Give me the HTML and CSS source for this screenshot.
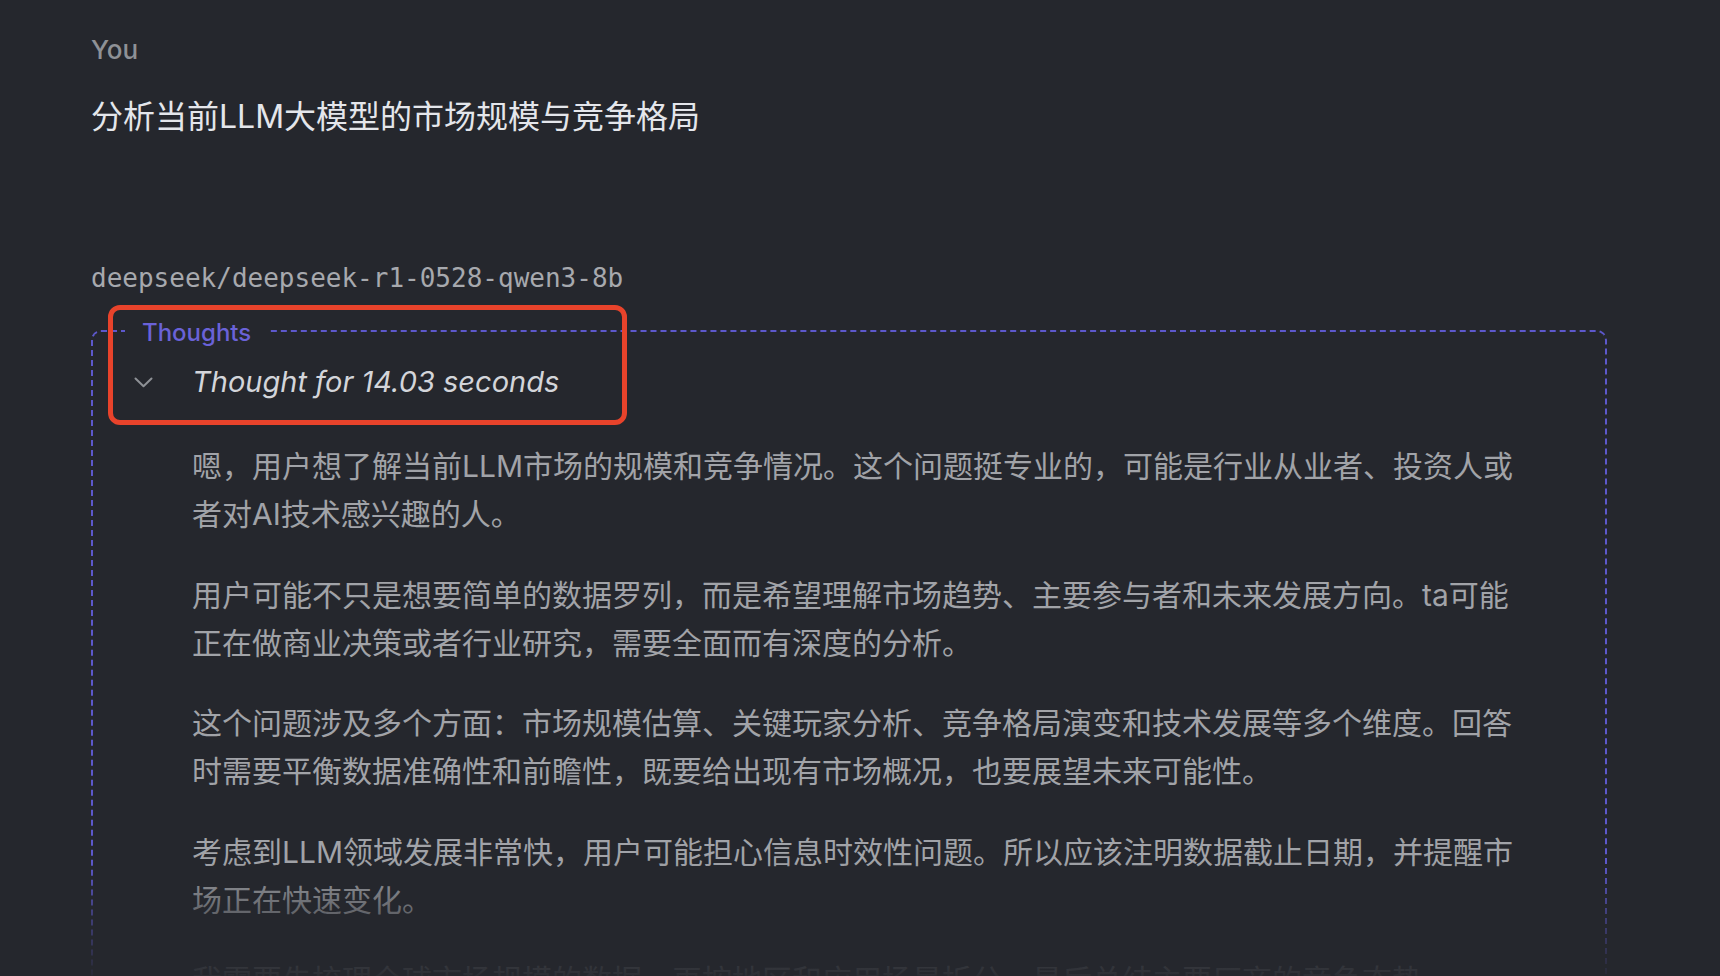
FILE: index.html
```html
<!DOCTYPE html>
<html lang="zh-CN">
<head>
<meta charset="utf-8">
<title>Chat</title>
<link rel="stylesheet" href="styles.css">
</head>
<body>
<main class="page">
  <section class="msg user">
    <div class="role">You</div>
    <div class="question">分析当前LLM大模型的市场规模与竞争格局</div>
  </section>
  <section class="msg assistant">
    <div class="model">deepseek/deepseek-r1-0528-qwen3-8b</div>
    <fieldset class="thoughts">
      <legend class="thoughts-label">Thoughts</legend>
      <div class="summary">
        <svg class="chevron" width="19" height="11" viewBox="0 0 19 11" aria-hidden="true"><path d="M1.5 1.5 L9.5 9.3 L17.5 1.5" fill="none" stroke="currentColor" stroke-width="2" stroke-linecap="round" stroke-linejoin="round"/></svg>
        <span class="summary-text">Thought for 14.03 seconds</span>
      </div>
      <div class="thought-body">
        <p>嗯，用户想了解当前LLM市场的规模和竞争情况。这个问题挺专业的，可能是行业从业者、投资人或者对AI技术感兴趣的人。</p>
        <p>用户可能不只是想要简单的数据罗列，而是希望理解市场趋势、主要参与者和未来发展方向。ta可能正在做商业决策或者行业研究，需要全面而有深度的分析。</p>
        <p>这个问题涉及多个方面：市场规模估算、关键玩家分析、竞争格局演变和技术发展等多个维度。回答时需要平衡数据准确性和前瞻性，既要给出现有市场概况，也要展望未来可能性。</p>
        <p>考虑到LLM领域发展非常快，用户可能担心信息时效性问题。所以应该注明数据截止日期，并提醒市场正在快速变化。</p>
        <p>我需要先梳理全球市场规模的数据，再按地区和应用场景拆分，最后总结主要厂商的竞争态势。</p>
      </div>
    </fieldset>
  </section>
  <div class="fade"></div>
  <div class="highlight"></div>
</main>
</body>
</html>
```
FILE: styles.css
```css
html, body {
  margin: 0;
  padding: 0;
  background: #25272d;
  height: 100%;
  overflow: hidden;
}

.page {
  position: relative;
  height: 976px;
  overflow: hidden;
  padding: 32px 113px 0 91px;
  box-sizing: border-box;
  font-family: Inter, "Noto Sans CJK SC", sans-serif;
}

.role {
  font-size: 26px;
  line-height: 36px;
  color: #8e9196;
  font-weight: 500;
}

.question {
  margin-top: 25px;
  font-size: 32px;
  line-height: 48px;
  color: #e4e6eb;
}

.assistant {
  margin-top: 119px;
}

.model {
  font-family: "DejaVu Sans Mono", "Liberation Mono", monospace;
  font-size: 26px;
  line-height: 36px;
  color: #a7a9ae;
}

.thoughts {
  margin: 18px 0 0 0;
  border: 2px dashed #5d58cc;
  border-radius: 10px;
  padding: 0 80px 0 41px;
  min-width: 0;
}

.thoughts-label {
  margin-left: -9px;
  padding: 4px 17px 0 17px;
  font-size: 24px;
  line-height: 30px;
  font-weight: 500;
  color: #6a62d8;
}

.summary {
  display: flex;
  align-items: center;
  margin-top: 14px;
  height: 40px;
}

.chevron {
  flex: none;
  color: #8e9196;
}

.summary-text {
  margin-left: 39px;
  font-size: 29px;
  line-height: 40px;
  font-style: italic;
  color: #d3d5da;
}

.thought-body {
  padding-left: 58px;
  padding-top: 40px;
}

.thought-body p {
  margin: 0 0 32.5px 0;
  font-size: 30px;
  line-height: 48px;
  color: #a1a3a8;
}

.fade {
  position: absolute;
  left: 0;
  right: 0;
  bottom: 0;
  height: 115px;
  background: linear-gradient(to bottom, rgba(37, 39, 45, 0) 0%, rgba(37, 39, 45, 0.5) 45%, rgba(37, 39, 45, 0.95) 100%);
  pointer-events: none;
}

.highlight {
  position: absolute;
  left: 108px;
  top: 305px;
  width: 519px;
  height: 120px;
  box-sizing: border-box;
  border: 5px solid #e8432b;
  border-radius: 12px;
  pointer-events: none;
}
```
